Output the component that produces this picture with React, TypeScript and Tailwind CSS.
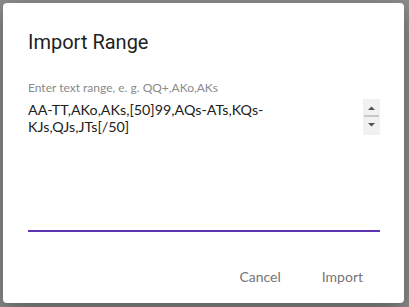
import React, { useState } from "react";

const initialRange = "AA-TT,AKo,AKs,[50]99,AQs-ATs,KQs-KJs,QJs,JTs[/50]";

const ImportRangeDialog = () => {
  const [range, setRange] = useState(initialRange);

  return (
    <div className="h-[307px] w-[409px] overflow-hidden bg-[#8c8c8c] p-[3px]">
      <div className="flex h-[300px] w-[401px] flex-col rounded-[4px] bg-white shadow-[0_8px_24px_rgba(0,0,0,0.35)]">
        <h2 className="px-[25px] pt-[27px] font-['Roboto',sans-serif] text-[20px] font-normal leading-[24px] text-[#1f1f1f]">
          Import Range
        </h2>
        <div className="pl-[25px] pr-[24px] pt-[27px]">
          <label
            htmlFor="range"
            className="block font-['Lato','Noto_Sans',sans-serif] text-[12px] leading-[14px] text-[#8a8a8a]"
          >
            Enter text range, e. g. QQ+,AKo,AKs
          </label>
          <div className="flex h-[137px] flex-col border-b-2 border-[#5e35b1]">
            <div className="flex items-start">
              <textarea
                id="range"
                rows={2}
                value={range}
                onChange={(e) => setRange(e.target.value)}
                className="mt-[6px] h-[34px] flex-1 resize-none overflow-hidden bg-transparent pr-[70px] font-['Lato','Noto_Sans',sans-serif] text-[14.3px] leading-[17px] text-[#212121] outline-none"
              />
              {/* fake scrollbar like the native one */}
              <div className="mt-[4px] flex h-[36px] w-[17px] flex-col items-center bg-[#f1f1f1]">
                <svg width="17" height="14" viewBox="0 0 17 14" className="mt-[1px]">
                  <path d="M5 10 L8.5 6.5 L12 10 Z" fill="#505050" />
                </svg>
                <div className="mt-[1px] h-[2px] w-[15px] bg-[#c8c8c8]" />
                <svg width="17" height="14" viewBox="0 0 17 14" className="mt-[1px]">
                  <path d="M5 5 L12 5 L8.5 8.5 Z" fill="#505050" />
                </svg>
              </div>
            </div>
          </div>
        </div>
        <div className="mt-auto flex justify-end gap-[41px] pb-[17px] pr-[41px] font-['Lato','Noto_Sans',sans-serif] text-[14px] leading-[18px] text-[#757575]">
          <button type="button">Cancel</button>
          <button type="button">Import</button>
        </div>
      </div>
    </div>
  );
};

export default function App() {
  return <ImportRangeDialog />;
}
